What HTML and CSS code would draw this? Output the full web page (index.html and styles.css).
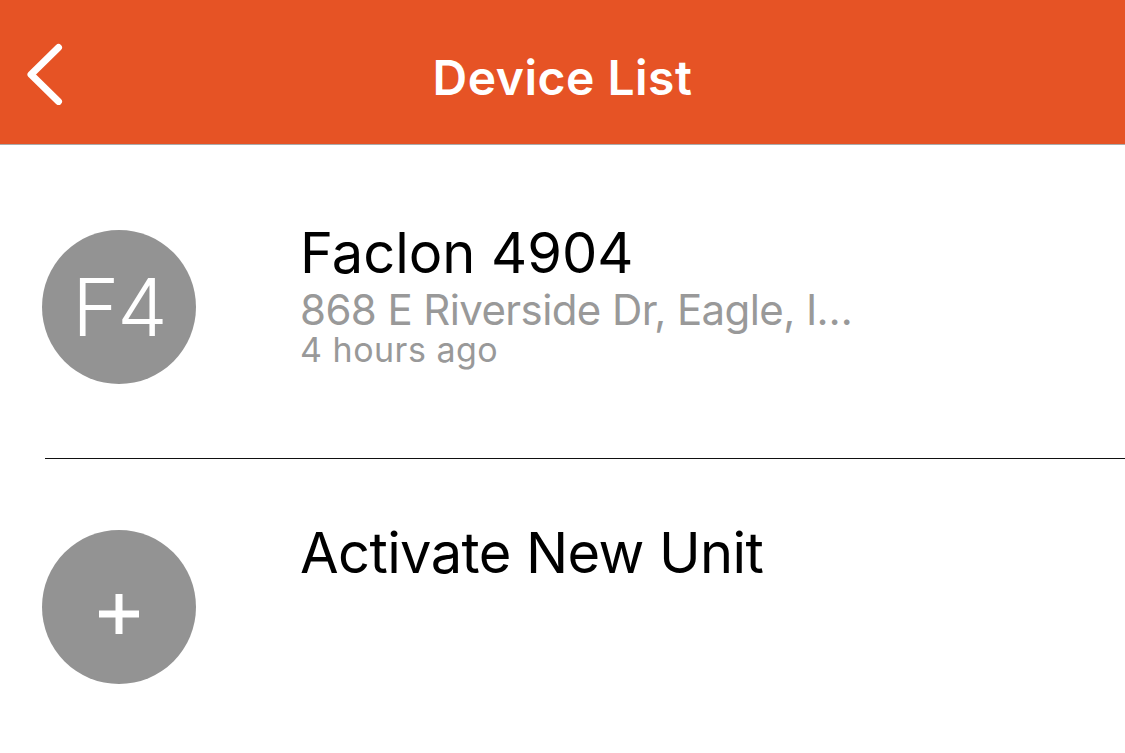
FILE: index.html
```html
<!DOCTYPE html>
<html lang="en">
<head>
<meta charset="utf-8">
<title>Device List</title>
<link rel="stylesheet" href="styles.css">
</head>
<body>
<header class="topbar">
  <button class="back" aria-label="Back">
    <svg width="40" height="64" viewBox="0 0 40 64" aria-hidden="true">
      <path d="M31.5 6.5 L4 33.5 L31.5 60.5" fill="none" stroke="#fff" stroke-width="7" stroke-linecap="round" stroke-linejoin="round"/>
    </svg>
  </button>
  <h1 class="title">Device List</h1>
  <div class="spacer"></div>
</header>
<main class="list">
  <div class="item item-device">
    <div class="avatar"><span class="initials">F4</span></div>
    <div class="info">
      <div class="name name-device">Faclon 4904</div>
      <div class="address">868 E Riverside Dr, Eagle, I…</div>
      <div class="time">4 hours ago</div>
    </div>
  </div>
  <div class="divider"></div>
  <div class="item item-add">
    <div class="avatar">
      <svg class="plus" width="40" height="40" viewBox="0 0 40 40" aria-hidden="true">
        <rect x="0" y="16.5" width="40" height="7" fill="#fff"/>
        <rect x="16.5" y="0" width="7" height="40" fill="#fff"/>
      </svg>
    </div>
    <div class="info">
      <div class="name name-add">Activate New Unit</div>
    </div>
  </div>
</main>
</body>
</html>
```
FILE: styles.css
```css
* { box-sizing: border-box; }
html, body {
  margin: 0;
  padding: 0;
  background: #ffffff;
  font-family: Inter, "Noto Sans", "Liberation Sans", sans-serif;
}
.topbar {
  height: 145px;
  padding-top: 11px;
  background: #e65325;
  border-bottom: 1px solid #ababab;
  display: grid;
  grid-template-columns: 1fr auto 1fr;
  align-items: center;
}
.back {
  justify-self: start;
  margin-left: 27px;
  padding: 0;
  border: 0;
  background: none;
  display: flex;
  width: 40px;
  height: 64px;
  margin-top: -10px;
}
.title {
  margin: 0;
  color: #fff;
  font-size: 48px;
  font-weight: 600;
  line-height: 56px;
  letter-spacing: 0.5px;
}
.list {
  display: flex;
  flex-direction: column;
}
.item {
  display: flex;
  align-items: flex-start;
  padding-left: 42px;
}
.item-device {
  padding-top: 76px;
  padding-bottom: 74px;
}
.item-add {
  padding-top: 62px;
}
.avatar {
  flex: none;
  width: 154px;
  height: 154px;
  margin-top: 9px;
  border-radius: 50%;
  background: #939393;
  display: flex;
  align-items: center;
  justify-content: center;
  color: #fff;
}
.initials {
  font-size: 80px;
  font-weight: 300;
  line-height: 1;
  letter-spacing: -2px;
}
.plus {
  margin-top: 14px;
}
.info {
  margin-left: 104px;
  display: flex;
  flex-direction: column;
}
.name {
  font-size: 56px;
  line-height: 64px;
  color: #000;
}
.name-device {
  letter-spacing: 0;
}
.name-add {
  letter-spacing: -0.6px;
}
.address {
  margin-top: 3px;
  font-size: 42px;
  line-height: 44px;
  color: #999999;
  letter-spacing: -0.6px;
}
.time {
  font-size: 34px;
  line-height: 36px;
  color: #999999;
  letter-spacing: 0.5px;
}
.divider {
  height: 1px;
  margin-left: 45px;
  background: #111;
}
```
